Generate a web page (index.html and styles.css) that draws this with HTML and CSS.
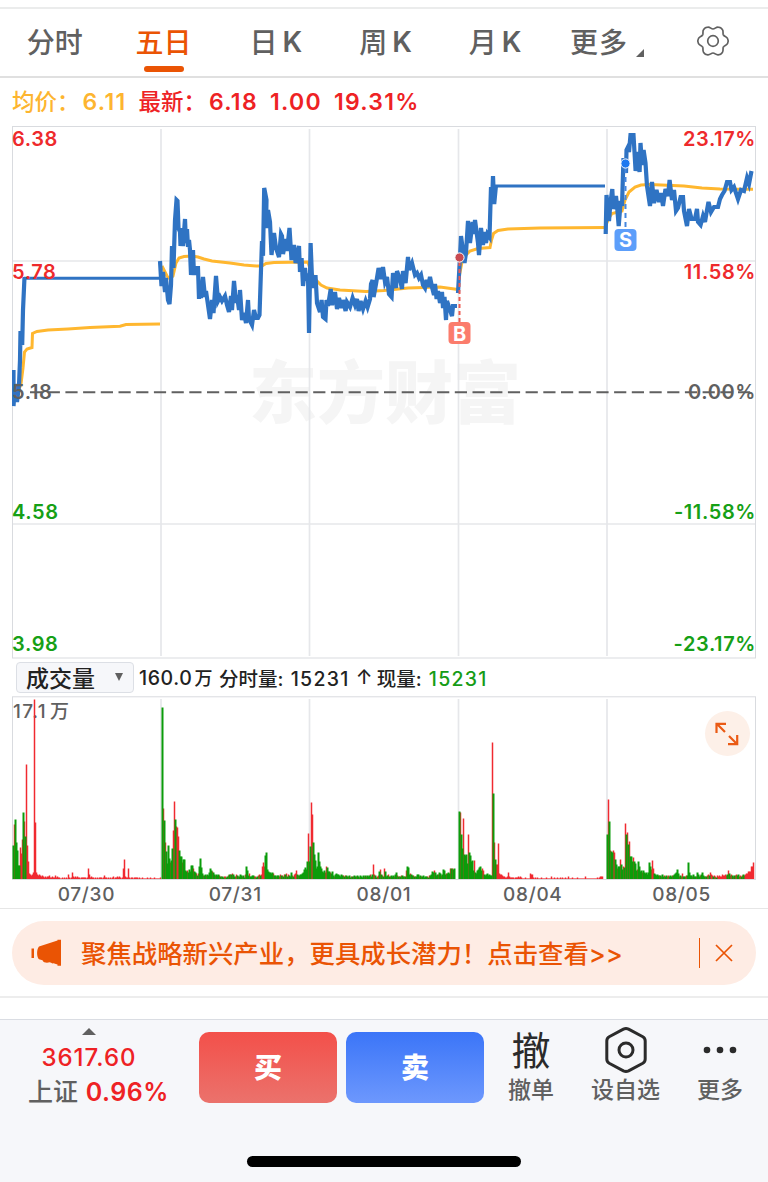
FILE: index.html
```html
<!DOCTYPE html>
<html lang="zh-CN">
<head>
  <meta charset="UTF-8">
  <meta name="viewport" content="width=device-width, initial-scale=1.0">
  <title>五日行情</title>
  <link rel="stylesheet" href="styles.css">
</head>
<body>
  <nav class="tabs">
    <a class="tab">分时</a>
    <a class="tab active">五日</a>
    <a class="tab k">日<span>K</span></a>
    <a class="tab k">周<span>K</span></a>
    <a class="tab k">月<span>K</span></a>
    <a class="tab more">更多<i class="corner"></i></a>
    <a class="tab">
      <svg class="gear" width="36" height="36" viewBox="-18 -18 36 36">
        <defs><path id="tooth" d="M10.4 -6C11.4 -4.3 13.600 -4.600 14.600 -2.400C15.400 -.9 15.400 .9 14.600 2.400C13.600 4.600 11.4 4.3 10.4 6"/></defs>
        <use href="#tooth"/>
        <use href="#tooth" transform="rotate(60)"/>
        <use href="#tooth" transform="rotate(120)"/>
        <use href="#tooth" transform="rotate(180)"/>
        <use href="#tooth" transform="rotate(240)"/>
        <use href="#tooth" transform="rotate(300)"/>
        <circle r="5.3"/>
      </svg>
    </a>
  </nav>

  <div class="quote">
    <span class="avg">均价：<b>6.11</b></span>
    <span class="last">最新：<b>6.18</b></span>
    <span class="last"><b>1.00</b></span>
    <span class="last"><b>19.31%</b></span>
  </div>

  <!-- price chart -->
  <svg class="price-chart" width="744" height="533" viewBox="12 126 744 533">
    <text class="watermark" x="249" y="418" textLength="272">东方财富</text>
    <path class="grid" d="M161 129V656M309.500 129V656M458.500 129V656M607 129V656M12 261H756M12 524H756"/>
    <rect class="frame" x="12.500" y="126.500" width="743" height="531.500"/>

    <g class="avg-line">
      <path d="M14 398L18 392L21 384L23 368L24.500 352L27 349L32 347.500L32.500 333.500L37 331.500L48 330L68 329L90 327.500L120 326.200L126 324.500L160 324"/>
      <path d="M162 266L167 276L170 279L173 276L176 263L179 258L184 256.500L192 256L198 257L204 259L212 261L230 263L244 265L256 266L262 266L266 263.500L274 262.500L308 262L311 272L315 279L321 285L327 288L340 290L366 291.500L384 290.500L408 288L440 287L458 289.500"/>
      <path d="M459.500 275L462 262L466 255L470 251L478 248.500L490 247.500L491.500 240L493.500 233.500L498 230.500L508 229L540 228L606 227.500"/>
      <path d="M606 225L609 218L612 213.500L622 211L625 200L629 192L635 187L641 185L650 184.500L684 186L702 188L720 189L753 189.300"/>
    </g>

    <g class="price-line">
      <path d="M13.500 370V406L15 384L17 402L19 385L20 360L20.500 331L22.200 345L23 310L24.500 277"/>
      <path class="halt" d="M24 278.300H160M495 186H605"/>
      <path d="M160 261L161.500 286L163 272L165 292L166 278L168 300L169.500 304L171 285L172 246L173.500 268L175 220L176.500 200L177.500 201L178.500 228L180 232L180.500 246L182 228L183 246L185 219L186 243L187 229L188 247L189 240L190 250L191 275L193 250L194 275L195 268L198 268L199 299L200 282L201 298L203 277L205 297L206 291L208 305L210 319L212 300L213.500 313L216 276L218 301L220 297L222 301L225 296L227 305L229 312L231 296L232 310L234 281L236 303L237 295L239 310L240 290L242 320L244 313L246 323L248 300L249 319L252 325L254 310L256 318L258 318L259.500 315L261 270L262 241L263 256L264.200 188L266.500 200L266 228L268 210L270 222L271.500 255L274 233L276 248L279 257L281 234L282 236L283 254L286 239L287 251L289.500 228L291.500 260L294 245L295.600 263L299 246L300 272L301.600 258L303 286L305 268L306 278L308 276L309 333L310.600 243L312 278L313.600 288L315.500 275L317 303L320 312L321.600 300L323 317L325.500 319L326.500 300L328 306L330.700 289L332 305L335 292L337 309L339 298L341.600 308L343 300L345.600 311L347 302L350 307L352.600 298L355 305L357 299L358.600 311L360.600 301L363 309L365.600 301L367.600 307L370 299L371 284L372.600 280L373.600 297L376 284L378.600 268L381 279L383 267L385 282L387 277L389 294L391.600 297L393 273L396 288L397 271L400 279L402 289L403 271L405.600 283L408 257L409 270L412 263L415 275L417 273L419 278L421 275L423 285L425 288L426.600 280L428 287L430 277L432 287L434 295L435 284L436.600 299L438 291L440 303L442 292L443 308L444.500 297L446 320L447 301L449 307L452 316L453 306H457"/>
      <path d="M458 293L460 257L461 236L462.500 247L464.500 263L466 253L468 221L470 243L472.600 222L474 234L475 220L478 243L479 255L481 228L483 245L484 232L486 243L487.500 234L489.500 237L491 187L492 203L493 176L494.200 204L496 185"/>
      <path d="M605.700 234L606.500 195L609 221L610.500 202L612.300 189L613.300 209L616 196L617.300 209L618.700 226L620.700 201L622 206L623.500 158L626 173L626.500 150L628 147L629 152L630.500 135H633.500L635.600 171L637 152L639.600 172L640.500 143L642 165L643.600 150L645.500 163L647 186L650 206L652 182L654 203L656.500 190L659 202L661 193L663 206L665.500 189L668 196L669.600 180L672 200L674 190L676 211L678 208L680.600 197H683L684 211L687 226L689 209L691.600 219H695L697 209L698 222L700.600 225L703 216L705 222L707 210L708.500 202L711 212L714 207L718 207L720 199L722 195L724.500 191L727 182H730L731.500 190L734 187L738 199L741 190L744 191L747 178L749 184L751.500 171"/>
    </g>

    <path class="buy-stem" d="M459.500 262V322"/>
    <circle class="buy-dot" cx="459.500" cy="257.500" r="4.600"/>
    <rect class="buy-box" x="448.500" y="322" width="22" height="22" rx="4"/>
    <text class="mark" x="459.500" y="340.500">B</text>

    <path class="sell-stem" d="M625.500 168V228"/>
    <circle class="sell-dot" cx="625.500" cy="163.500" r="4.600"/>
    <rect class="sell-box" x="614.500" y="229" width="22" height="22" rx="4"/>
    <text class="mark" x="625.500" y="247">S</text>

    <g class="axis">
      <text class="up" x="12" y="146">6.38</text>
      <text class="up" x="12" y="278.500">5.78</text>
      <text class="flat" x="12" y="399">5.18</text>
      <text class="down" x="12" y="518.500">4.58</text>
      <text class="down" x="12" y="651">3.98</text>
      <text class="up end" x="756" y="146">23.17%</text>
      <text class="up end" x="756" y="278.500">11.58%</text>
      <text class="flat end" x="756" y="399">0.00%</text>
      <text class="down end" x="756" y="518.500">-11.58%</text>
      <text class="down end" x="756" y="651">-23.17%</text>
    </g>
    <path class="zero" d="M30 392.300H755"/>
  </svg>

  <div class="vol-head">
    <div class="select">成交量<i class="caret"></i></div>
    <span>160.0<b>万</b></span>
    <span>分时量: <em>15231</em></span>
    <span class="arrow">↑</span>
    <span>现量: <em class="now">15231</em></span>
  </div>

  <!-- volume chart, bars come from script.js -->
  <div class="volume">
    <svg width="744" height="185" viewBox="12 696 744 185">
      <path class="grid" d="M161 699V879M309.500 699V879M458.500 699V879M607 699V879"/>
      <rect class="frame" x="12.500" y="696.800" width="743" height="182.700"/>
      <text class="vol-max" x="13" y="718">17.1<tspan dx="3">万</tspan></text>
      <g id="bars"></g>
    </svg>
    <button class="expand">
      <svg width="24" height="24" viewBox="0 0 24 24">
        <path d="M1.500 11V1.800H11M1.800 1.800L10 10M22.200 13V22.200H13M22.200 22.200L14 14"/>
      </svg>
    </button>
  </div>

  <div class="dates">
    <span>07/30</span><span>07/31</span><span>08/01</span><span>08/04</span><span>08/05</span>
  </div>

  <div class="banner-row">
    <div class="banner">
      <svg class="horn" width="31" height="28" viewBox="0 0 31 28">
        <path d="M.500 9.500H3V19H.500ZM8 7.500L26.500 1.500V.800H30V26.800H26.500V25.500L22.500 24.300C21 24.800 20 23.500 18.500 23.300C16.500 24.200 12.500 24 11.500 21.300L8 20.300C5.500 18 5.500 10 8 7.500Z"/>
      </svg>
      <span class="banner-text">聚焦战略新兴产业，更具成长潜力！点击查看&gt;&gt;</span>
      <i class="bar"></i>
      <svg class="close" width="18" height="18" viewBox="0 0 18 18"><path d="M1 1L17 17M17 1L1 17"/></svg>
    </div>
  </div>

  <footer class="bottom">
    <div class="index">
      <i class="tri"></i>
      <div class="value">3617.60</div>
      <div class="change">上证 <span>0.96%</span></div>
    </div>
    <button class="trade buy">买</button>
    <button class="trade sell">卖</button>
    <div class="action cancel"><span class="big">撤</span><span>撤单</span></div>
    <div class="action fav">
      <svg width="44" height="48" viewBox="-22 -24 44 48">
        <path d="M-2.600 -20.800Q0 -22 2.600 -20.800L16.800 -13.200Q19.200 -11.800 19.200 -9V9Q19.200 11.800 16.800 13.200L2.600 20.800Q0 22 -2.600 20.800L-16.800 13.200Q-19.200 11.800 -19.200 9V-9Q-19.200 -11.800 -16.800 -13.200Z"/>
        <circle r="7"/>
      </svg>
      <span>设自选</span>
    </div>
    <div class="action dots">
      <svg width="44" height="48" viewBox="-22 -24 44 48"><circle cx="-13" r="3.300"/><circle r="3.300"/><circle cx="13" r="3.300"/></svg>
      <span>更多</span>
    </div>
    <div class="home"></div>
  </footer>
  <script src="script.js"></script>
</body>
</html>
```

FILE: styles.css
```css
* {
  box-sizing: border-box;
}
body {
  margin: 0;
  padding-top: 7px;
  background: #fff;
  color: #222;
  font-family: Inter, "Noto Sans CJK SC", sans-serif;
  font-weight: 500;
}
svg {
  display: block;
  fill: none;
}
i, em, b {
  font-style: normal;
  font-weight: inherit;
}
button {
  border: none;
  padding: 0;
  font-family: inherit;
}

/* tabs */
.tabs {
  display: grid;
  grid-template-columns: repeat(7, 1fr);
  height: 71px;
  border-top: 2px solid #ebecec;
  border-bottom: 2px solid #e0e0e0;
}
.tab {
  position: relative;
  display: flex;
  align-items: center;
  justify-content: center;
  padding-bottom: 3px;
  font-size: 28px;
  color: #606060;
}
.tab.active {
  padding-right: 2px;
  color: #ea5404;
}
.tab.active::after {
  content: "";
  position: absolute;
  bottom: 4px;
  width: 40px;
  height: 6px;
  border-radius: 3px;
  background: #ea5404;
}
.tab.k {
  gap: 5px;
  padding-left: 3px;
}
.tab.k span {
  padding-top: 1px;
  font-size: 28px;
  font-weight: 600;
}
.tab.more {
  padding-left: 7px;
  letter-spacing: 1px;
}
.corner {
  align-self: flex-end;
  margin: 0 0 16px 8px;
  border-left: 8px solid transparent;
  border-bottom: 8px solid #606060;
}
.gear {
  stroke: #606060;
  stroke-width: 1.7;
}

/* quote line */
.quote {
  display: flex;
  align-items: center;
  gap: 12px;
  height: 48px;
  padding-left: 12px;
  font-size: 22.500px;
  line-height: 30px;
}
.quote span {
  display: flex;
  align-items: center;
}
.quote b {
  padding-left: 3px;
  font-size: 23px;
  font-weight: 600;
  letter-spacing: 1.300px;
}
.quote span:nth-child(n+3) b {
  padding-left: 0;
}
.avg {
  color: #fdb52f;
}
.last {
  color: #ee2224;
}

/* charts */
.price-chart {
  margin-left: 12px;
}
.grid {
  stroke: #e6e7ea;
  stroke-width: 1.7;
}
.frame {
  stroke: #d9dbdf;
}
.watermark {
  font-family: "Noto Sans CJK SC", sans-serif;
  font-size: 68px;
  font-weight: 900;
  fill: #f5f5f5;
}
.zero {
  stroke: #606060;
  stroke-width: 2;
  stroke-dasharray: 12.200 5.500;
}
.avg-line {
  stroke: #ffb72f;
  stroke-width: 3;
}
.price-line {
  stroke: #2f73c3;
  stroke-width: 4.200;
}
.price-line .halt {
  stroke-width: 3;
}
.buy-stem {
  stroke: #ee5a50;
  stroke-width: 2;
  stroke-dasharray: 4 3;
}
.sell-stem {
  stroke: #4587e0;
  stroke-width: 2;
  stroke-dasharray: 5 4;
}
.buy-dot {
  fill: #c94b52;
  stroke: #fff;
}
.sell-dot {
  fill: #1c78f0;
  stroke: #fff;
}
.buy-box {
  fill: #fb7c6c;
}
.sell-box {
  fill: #5c9efa;
}
.mark {
  font-size: 20px;
  font-weight: 700;
  fill: #fff;
  text-anchor: middle;
}
.axis {
  font-size: 20px;
  font-weight: 560;
  letter-spacing: 0.600px;
}
.axis .end {
  text-anchor: end;
}
.axis .up {
  fill: #ee2a2c;
}
.axis .flat {
  fill: #606060;
}
.axis .down {
  fill: #16a016;
}

/* volume */
.vol-head {
  display: flex;
  align-items: center;
  height: 37px;
  padding-left: 16px;
  font-size: 19.500px;
  gap: 6px;
}
.vol-head span {
  padding-bottom: 1px;
}
.vol-head span:nth-child(2) {
  margin-left: -1px;
  letter-spacing: 0.600px;
}
.vol-head b {
  font-size: 18px;
  margin-left: 2px;
}
.vol-head em {
  margin-left: 2px;
  letter-spacing: 1.300px;
}
.vol-head .now {
  color: #169c16;
}
.vol-head .arrow {
  width: 15px;
}
.select {
  display: flex;
  align-items: center;
  justify-content: space-between;
  width: 118px;
  height: 31px;
  padding: 0 10px 2px 9px;
  border: 1px solid #dcdfe5;
  border-radius: 4px;
  background: #f6f7fa;
  font-size: 23px;
}
.caret {
  border: 4.500px solid transparent;
  border-top: 8px solid #606060;
  border-bottom: 0;
}
.volume {
  position: relative;
  margin-left: 12px;
  width: 744px;
}
.vol-max {
  font-size: 19px;
  letter-spacing: 1.400px;
  fill: #606060;
}
.bar-r {
  stroke: #f02a30;
  stroke-width: 1.500;
}
.bar-g {
  stroke: #0b9c0b;
  stroke-width: 2;
}
.expand {
  position: absolute;
  top: 15px;
  right: 6px;
  display: flex;
  align-items: center;
  justify-content: center;
  width: 45px;
  height: 45px;
  padding-right: 2px;
  border-radius: 50%;
  background: #fdf0e8;
}
.expand svg {
  stroke: #ea5a14;
  stroke-width: 2.200;
}
.dates {
  display: grid;
  grid-template-columns: repeat(5, 1fr);
  height: 27px;
  margin: 0 12px;
  font-size: 19px;
  line-height: 28px;
  text-align: center;
  color: #606060;
  letter-spacing: 0.700px;
}

/* banner */
.banner-row {
  height: 90px;
  padding: 12px 12px 0;
  border-top: 1px solid #e6e6e6;
  border-bottom: 2px solid #ededed;
}
.banner {
  display: flex;
  align-items: center;
  height: 64px;
  padding: 0 23px 0 19px;
  border-radius: 32px;
  background: #feece4;
  color: #ea5404;
}
.horn {
  fill: #ea5404;
}
.banner-text {
  flex: 1;
  margin-left: 19px;
  padding-bottom: 3px;
  font-size: 25.400px;
  white-space: nowrap;
}
.bar {
  width: 1.500px;
  height: 30px;
  background: #ea5404;
}
.close {
  margin-left: 15px;
  stroke: #ea5404;
  stroke-width: 1.700;
}

/* bottom bar */
.bottom {
  position: relative;
  display: flex;
  height: 163px;
  margin-top: 21px;
  padding-top: 12px;
  border-top: 1px solid #dadde3;
  background: #f6f7fa;
}
.index {
  width: 199px;
  padding-right: 21px;
  font-size: 24px;
  text-align: center;
  color: #ee2224;
}
.tri {
  display: block;
  width: 14px;
  margin: -4px auto 0;
  border: 7px solid transparent;
  border-top: 0;
  border-bottom-color: #606060;
}
.value {
  margin-top: 7px;
  line-height: 32px;
  letter-spacing: 1px;
}
.change {
  padding-left: 19px;
  line-height: 37px;
  font-size: 25px;
  color: #606060;
}
.change span {
  margin-left: 1px;
  font-weight: 600;
  letter-spacing: 0.500px;
  color: #ee2224;
}
.trade {
  width: 138px;
  height: 71px;
  margin-right: 9px;
  padding-bottom: 4px;
  border-radius: 10px;
  color: #fff;
  font-size: 28px;
  font-weight: 900;
}
.buy {
  background: linear-gradient(#f3504a, #eb726c);
}
.sell {
  background: linear-gradient(#3b75f8, #6d98fd);
}
.action {
  display: flex;
  flex-direction: column;
  align-items: center;
  font-size: 23px;
  line-height: 30px;
  color: #606060;
}
.cancel {
  width: 76px;
}
.fav {
  width: 113px;
}
.dots {
  width: 76px;
}
.big {
  height: 43px;
  font-size: 39px;
  line-height: 38px;
  font-weight: 400;
  color: #2b2b2b;
}
.action svg {
  height: 48px;
  margin: -6px 0 1px;
}
.fav svg {
  stroke: #2b2b2b;
  stroke-width: 3;
}
.dots svg {
  fill: #2b2b2b;
}
.home {
  position: absolute;
  left: 247px;
  bottom: 15px;
  width: 274px;
  height: 11px;
  border-radius: 6px;
  background: #000;
}
```

FILE: script.js
```js
// one bar per pixel column, "height + colour", r = up, g = down
const days = [
  { x: 13, bars: "33g 54r 59g 36g 28g 13g 13g 31r 25r 39r 66g 57r 42g 114r 33r 17r 5r 4r 3r 4r 6r 179r 56r 6r 4r 3r 4r 3r 2r 3r 2r 1r 2r 1r 2r 2r 3r 1r 1r 2r 1r 1r 3r 1r 2r 1r 1r 0r 0r 1r 0r 1r 0r 1r 0r 4r 1r 0r 1r 6r 2r 1r 2r 1r 2r 1r 1r 0r 1r 1r 1r 1r 1r 0r 1r 10r 4r 1r 2r 1r 1r 0r 1r 0r 1r 0r 1r 1r 1r 0r 1r 3r 1r 1r 0r 1r 0r 1r 0r 1r 2r 0r 1r 1r 2r 1r 2r 1r 0r 1r 10r 19r 2r 1r 1r 10r 1r 0r 1r 1r 0r 1r 1r 1r 1r 0r 1r 0r 0r 1r 0r 0r 0r 0r 1r 0r 0r 1r 0r 0r 0r 1r 0r 0r 0r 0r 0r 1r" },
  { x: 162, bars: "171g 70r 58g 36r 27g 15g 33g 20g 16r 18g 30g 48r 77r 59g 52r 51r 42r 28g 22g 22g 16r 19g 19g 8g 7g 8r 6g 9g 7g 13g 13g 10r 7g 6g 5r 3g 5r 12g 20g 11g 5g 3r 3g 4g 3r 4g 3g 6g 10g 8g 7r 6g 4g 3r 4g 3g 4g 3r 2g 2r 2g 1g 2r 2r 1g 2g 3r 4g 4r 4g 5r 4g 2g 2r 4r 3g 2r 2g 4g 3g 2r 3g 1g 4r 12g 8g 3g 5r 2g 2g 3g 3g 2r 2r 1g 2g 3r 4r 3g 4r 12r 16r 12r 23g 26g 9g 7g 6g 6g 5g 6g 5r 3g 3g 2r 3g 3g 2r 4r 3g 3r 2g 4r 4g 5r 2g 4r 3g 2g 6g 3r 2g 4r 5r 8r 4g 3r 3g 4g 4g 5g 6g 9g 11g 9g 17g 45r" },
  { x: 309, bars: "17g 32g 76r 64r 36g 24g 18g 10g 12g 26g 17g 12g 10g 7g 6g 8g 6r 12r 11g 7g 7g 6r 5g 7g 3g 2r 4g 5g 4g 4g 3g 2g 4g 3g 3r 2g 3r 3g 2g 2r 3g 1g 2r 2g 2r 3g 2g 2r 3g 2g 1r 3g 2g 1g 3g 2r 3g 2r 3g 2g 3g 4r 2g 4g 14r 4r 3g 1g 2r 3r 7g 9r 4g 3r 2g 10r 7g 2g 3g 4r 2g 2r 3g 2g 3g 2r 4g 6g 3r 2g 2r 2g 3r 3g 2g 2r 2g 8r 12g 11g 4g 5r 4g 3g 3r 2g 2r 2g 4g 4g 2r 3g 2r 2g 3g 1g 2g 2g 2r 1g 3r 3g 4g 7g 6g 8r 6g 3g 4g 4r 6g 5g 3r 4g 9g 8g 4g 5r 5g 6g 5g 10r 10g 10r 9g 10g" },
  { x: 459, bars: "67g 66r 44g 30g 60r 24g 23g 24g 15g 44r 26g 23g 17g 18g 8g 18r 6g 5g 8g 9g 11g 12g 8g 10r 8r 4g 3g 4g 5g 3g 4g 3g 3g 136r 85g 36r 19g 14r 14r 35r 5r 4r 4r 3r 2r 2r 1r 1r 2r 6r 2r 1r 1r 1r 1r 0r 1r 1r 1r 2r 1r 2r 1r 0r 0r 0r 1r 0r 0r 0r 0r 5r 4r 4r 1r 0r 1r 0r 1r 0r 0r 0r 1r 0r 0r 0r 0r 1r 0r 0r 0r 0r 2r 0r 0r 1r 0r 0r 1r 0r 0r 1r 0r 1r 0r 0r 1r 0r 0r 2r 0r 0r 0r 1r 0r 0r 0r 0r 1r 0r 0r 0r 0r 0r 0r 0r 2r 0r 0r 0r 0r 0r 0r 0r 0r 0r 0r 0r 1r 0r 1r 2r 2r 2r" },
  { x: 607, bars: "44g 79r 57g 28r 27g 26g 28r 26r 19g 14g 10r 12g 12g 19r 14g 9g 12r 11g 55r 44g 46r 34g 37r 22g 22g 17g 21r 17g 15g 8g 9r 17g 12g 7g 8g 6r 8g 6g 5g 6g 4g 6g 16g 12g 9r 18r 10r 5g 4g 3g 4g 3g 3r 3g 2r 4g 2g 3r 2g 3g 2r 3r 2g 3g 2g 3r 3g 4g 5g 6g 9g 5g 2r 3g 2r 5r 2g 2g 2r 3r 3g 16g 6g 3g 3g 2r 4g 2g 2g 2r 6g 4g 2g 3r 4g 6g 3g 2g 2r 2g 3r 4r 3g 6r 4r 3r 2g 3r 2r 1g 3r 2r 3r 2r 2r 4r 3r 3r 4r 3r 4g 8r 5g 3r 4r 3g 2r 3g 3r 4r 3g 4g 2r 3r 2g 3r 4g 3r 4r 5r 5r 7r 7r 7r 12r 12r 16r" }
];

const baseline = 879;
const group = document.getElementById("bars");

function drawBars(color) {
  days.forEach((day) => {
    day.bars.split(" ").forEach((bar, i) => {
      if (bar.slice(-1) !== color) return;
      const height = parseInt(bar, 10) + 0.5;
      const path = document.createElementNS("http://www.w3.org/2000/svg", "path");
      path.setAttribute("class", "bar-" + color);
      path.setAttribute("d", `M${day.x + i + 0.5} ${baseline}v${-height}`);
      group.appendChild(path);
    });
  });
}

// green goes over red
drawBars("r");
drawBars("g");
```
